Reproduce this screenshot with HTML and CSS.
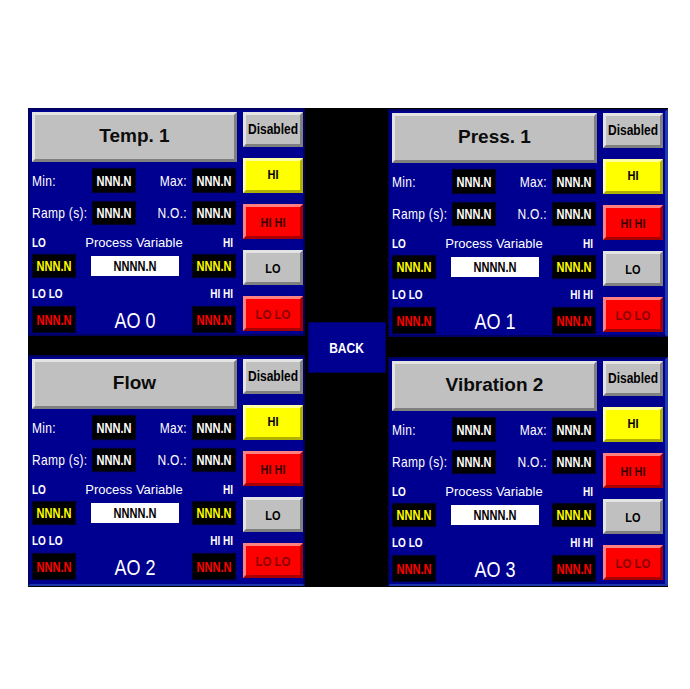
FILE: index.html
```html
<!DOCTYPE html>
<html>
<head>
<meta charset="utf-8">
<title>Alarm setup</title>
<link rel="stylesheet" href="styles.css">
</head>
<body>
<div class="screen">
  <div class="col col-left">
    <section class="panel">
      <div class="main">
        <div class="title">Temp. 1</div>
        <div class="row r1"><span class="lbl"><span class="tx">Min:</span></span><span class="val"><span class="tx">NNN.N</span></span><span class="lbl rt"><span class="tx">Max:</span></span><span class="val"><span class="tx">NNN.N</span></span></div>
        <div class="row r2"><span class="lbl"><span class="tx">Ramp (s):</span></span><span class="val"><span class="tx">NNN.N</span></span><span class="lbl rt"><span class="tx">N.O.:</span></span><span class="val"><span class="tx">NNN.N</span></span></div>
        <div class="row r3"><span class="tag"><span class="tx">LO</span></span><span class="pv-label">Process Variable</span><span class="tag tag-r"><span class="tx">HI</span></span></div>
        <div class="row r4"><span class="val v-y first"><span class="tx">NNN.N</span></span><span class="pv"><span class="tx">NNNN.N</span></span><span class="val v-y last"><span class="tx">NNN.N</span></span></div>
        <div class="row r5"><span class="tag"><span class="tx">LO LO</span></span><span class="tag tag-r"><span class="tx">HI HI</span></span></div>
        <div class="row r6"><span class="val v-r first"><span class="tx">NNN.N</span></span><span class="ao"><span class="tx">AO 0</span></span><span class="val v-r last"><span class="tx">NNN.N</span></span></div>
      </div>
      <div class="side">
        <div class="btn b-gray b-dis"><span class="tx">Disabled</span></div>
        <div class="btn b-yellow"><span class="tx">HI</span></div>
        <div class="btn b-red b-hh"><span class="tx">HI HI</span></div>
        <div class="btn b-gray"><span class="tx">LO</span></div>
        <div class="btn b-red b-ll"><span class="tx">LO LO</span></div>
      </div>
    </section>
    <section class="panel panel-bottom">
      <div class="main">
        <div class="title">Flow</div>
        <div class="row r1"><span class="lbl"><span class="tx">Min:</span></span><span class="val"><span class="tx">NNN.N</span></span><span class="lbl rt"><span class="tx">Max:</span></span><span class="val"><span class="tx">NNN.N</span></span></div>
        <div class="row r2"><span class="lbl"><span class="tx">Ramp (s):</span></span><span class="val"><span class="tx">NNN.N</span></span><span class="lbl rt"><span class="tx">N.O.:</span></span><span class="val"><span class="tx">NNN.N</span></span></div>
        <div class="row r3"><span class="tag"><span class="tx">LO</span></span><span class="pv-label">Process Variable</span><span class="tag tag-r"><span class="tx">HI</span></span></div>
        <div class="row r4"><span class="val v-y first"><span class="tx">NNN.N</span></span><span class="pv"><span class="tx">NNNN.N</span></span><span class="val v-y last"><span class="tx">NNN.N</span></span></div>
        <div class="row r5"><span class="tag"><span class="tx">LO LO</span></span><span class="tag tag-r"><span class="tx">HI HI</span></span></div>
        <div class="row r6"><span class="val v-r first"><span class="tx">NNN.N</span></span><span class="ao"><span class="tx">AO 2</span></span><span class="val v-r last"><span class="tx">NNN.N</span></span></div>
      </div>
      <div class="side">
        <div class="btn b-gray b-dis"><span class="tx">Disabled</span></div>
        <div class="btn b-yellow"><span class="tx">HI</span></div>
        <div class="btn b-red b-hh"><span class="tx">HI HI</span></div>
        <div class="btn b-gray"><span class="tx">LO</span></div>
        <div class="btn b-red b-ll"><span class="tx">LO LO</span></div>
      </div>
    </section>
  </div>
  <div class="col col-mid">
    <div class="back"><span class="tx">BACK</span></div>
  </div>
  <div class="col col-right">
    <section class="panel">
      <div class="main">
        <div class="title">Press. 1</div>
        <div class="row r1"><span class="lbl"><span class="tx">Min:</span></span><span class="val"><span class="tx">NNN.N</span></span><span class="lbl rt"><span class="tx">Max:</span></span><span class="val"><span class="tx">NNN.N</span></span></div>
        <div class="row r2"><span class="lbl"><span class="tx">Ramp (s):</span></span><span class="val"><span class="tx">NNN.N</span></span><span class="lbl rt"><span class="tx">N.O.:</span></span><span class="val"><span class="tx">NNN.N</span></span></div>
        <div class="row r3"><span class="tag"><span class="tx">LO</span></span><span class="pv-label">Process Variable</span><span class="tag tag-r"><span class="tx">HI</span></span></div>
        <div class="row r4"><span class="val v-y first"><span class="tx">NNN.N</span></span><span class="pv"><span class="tx">NNNN.N</span></span><span class="val v-y last"><span class="tx">NNN.N</span></span></div>
        <div class="row r5"><span class="tag"><span class="tx">LO LO</span></span><span class="tag tag-r"><span class="tx">HI HI</span></span></div>
        <div class="row r6"><span class="val v-r first"><span class="tx">NNN.N</span></span><span class="ao"><span class="tx">AO 1</span></span><span class="val v-r last"><span class="tx">NNN.N</span></span></div>
      </div>
      <div class="side">
        <div class="btn b-gray b-dis"><span class="tx">Disabled</span></div>
        <div class="btn b-yellow"><span class="tx">HI</span></div>
        <div class="btn b-red b-hh"><span class="tx">HI HI</span></div>
        <div class="btn b-gray"><span class="tx">LO</span></div>
        <div class="btn b-red b-ll"><span class="tx">LO LO</span></div>
      </div>
    </section>
    <section class="panel panel-bottom">
      <div class="main">
        <div class="title">Vibration 2</div>
        <div class="row r1"><span class="lbl"><span class="tx">Min:</span></span><span class="val"><span class="tx">NNN.N</span></span><span class="lbl rt"><span class="tx">Max:</span></span><span class="val"><span class="tx">NNN.N</span></span></div>
        <div class="row r2"><span class="lbl"><span class="tx">Ramp (s):</span></span><span class="val"><span class="tx">NNN.N</span></span><span class="lbl rt"><span class="tx">N.O.:</span></span><span class="val"><span class="tx">NNN.N</span></span></div>
        <div class="row r3"><span class="tag"><span class="tx">LO</span></span><span class="pv-label">Process Variable</span><span class="tag tag-r"><span class="tx">HI</span></span></div>
        <div class="row r4"><span class="val v-y first"><span class="tx">NNN.N</span></span><span class="pv"><span class="tx">NNNN.N</span></span><span class="val v-y last"><span class="tx">NNN.N</span></span></div>
        <div class="row r5"><span class="tag"><span class="tx">LO LO</span></span><span class="tag tag-r"><span class="tx">HI HI</span></span></div>
        <div class="row r6"><span class="val v-r first"><span class="tx">NNN.N</span></span><span class="ao"><span class="tx">AO 3</span></span><span class="val v-r last"><span class="tx">NNN.N</span></span></div>
      </div>
      <div class="side">
        <div class="btn b-gray b-dis"><span class="tx">Disabled</span></div>
        <div class="btn b-yellow"><span class="tx">HI</span></div>
        <div class="btn b-red b-hh"><span class="tx">HI HI</span></div>
        <div class="btn b-gray"><span class="tx">LO</span></div>
        <div class="btn b-red b-ll"><span class="tx">LO LO</span></div>
      </div>
    </section>
  </div>
</div>
</body>
</html>
```

FILE: styles.css
```css
* { box-sizing: border-box; }

body {
  margin: 0;
  background: #ffffff;
  font-family: "Liberation Sans", Arial, sans-serif;
}

.screen {
  margin: 108px 0 0 28px;
  width: 640px;
  height: 479px;
  background: #000000;
  display: flex;
}

.col { display: flex; flex-direction: column; }

.col-left { width: 277px; gap: 19px; }

.col-mid {
  width: 83px;
  align-items: center;
  justify-content: center;
}

.col-right { width: 280px; gap: 20px; padding-top: 1px; }

.panel {
  height: 228px;
  background: #000090;
  border: 2px solid #000060;
  padding: 2px 0 2px 2px;
  display: flex;
  gap: 6px;
}

.panel-bottom { height: 231px; border-bottom-color: #1a36a8; }

.col-right .panel {
  border-right: 3px solid #1f3ab0;
  padding-right: 2px;
}

.col-right .panel-bottom { height: 229px; }

.tx {
  display: inline-block;
  transform: scaleY(1.25);
}

.main {
  width: 205px;
  flex: none;
  display: flex;
  flex-direction: column;
}

.title {
  height: 50px;
  background: #c0c0c0;
  border: 3px solid;
  border-color: #e4e4e4 #808080 #808080 #e4e4e4;
  display: flex;
  align-items: center;
  justify-content: center;
  padding-bottom: 3px;
  font-size: 19px;
  font-weight: bold;
  color: #0c0c0c;
}

.row { display: grid; align-items: center; }

.r1, .r2 { grid-template-columns: 61px 42px 58px 42px; }
.r1 { margin-top: 7px; height: 23px; }
.r2 { margin-top: 10px; height: 22px; }

.r3, .r4, .r5, .r6 { grid-template-columns: 43px 16px 88px 14px 42px; }
.r3 { margin-top: 11px; height: 14px; }
.r4 { margin-top: 6px; height: 22px; }
.r5 { margin-top: 9px; height: 14px; }
.r6 { margin-top: 7px; height: 21px; }

.lbl {
  color: #ffffff;
  font-size: 12px;
  letter-spacing: 0.3px;
  white-space: nowrap;
}

.lbl.rt { text-align: right; padding-right: 6px; }

.val {
  height: 100%;
  background: #000000;
  box-shadow: 0 0 1px 1px rgba(0, 0, 40, 0.9);
  color: #ffffff;
  font-size: 11px;
  font-weight: bold;
  display: flex;
  align-items: center;
  justify-content: center;
}

.val .tx { transform: scaleY(1.3); }

.val.first { grid-column: 1; width: 42px; justify-self: end; }
.val.last { grid-column: 5; }

.v-y { color: #ffff00; }
.v-r { color: #ff0000; }

.tag {
  color: #ffffff;
  font-size: 10px;
  font-weight: bold;
  white-space: nowrap;
}

.r3 .tag, .r5 .tag { grid-column: 1; justify-self: start; }
.r3 .tag-r, .r5 .tag-r { grid-column: 5; justify-self: end; margin-right: 2px; }

.pv-label {
  grid-column: 2 / span 3;
  justify-self: center;
  color: #ffffff;
  font-size: 13px;
  white-space: nowrap;
}

.pv {
  grid-column: 3;
  height: 20px;
  background: #ffffff;
  color: #000000;
  font-size: 11px;
  font-weight: bold;
  display: flex;
  align-items: center;
  justify-content: center;
}

.ao {
  grid-column: 3;
  justify-self: center;
  color: #ffffff;
  font-size: 18px;
  line-height: 21px;
  margin-top: 4px;
}

.ao .tx { transform: scaleY(1.2); }

.side {
  width: 60px;
  flex: none;
  display: flex;
  flex-direction: column;
  gap: 11px;
}

.btn {
  height: 35px;
  border: 3px solid;
  display: flex;
  align-items: center;
  justify-content: center;
  font-size: 11px;
  font-weight: bold;
  color: #000000;
}

.btn .tx { transform: scaleY(1.15); }

.b-gray {
  background: #c0c0c0;
  border-color: #e4e4e4 #808080 #808080 #e4e4e4;
}

.b-dis { font-size: 12px; padding-bottom: 2px; }

.b-yellow {
  background: #ffff00;
  border-color: #ffffa0 #b0b000 #b0b000 #ffffa0;
  padding-bottom: 3px;
}

.b-red {
  background: #ff0000;
  border-color: #ff8080 #a80000 #a80000 #ff8080;
}

.b-hh { color: #3a0000; }
.b-ll { color: #8a0000; font-size: 11.5px; }

.back {
  width: 78px;
  height: 51px;
  background: #000090;
  border: 1px solid #000060;
  color: #ffffff;
  font-size: 12px;
  font-weight: bold;
  display: flex;
  align-items: center;
  justify-content: center;
}
```
